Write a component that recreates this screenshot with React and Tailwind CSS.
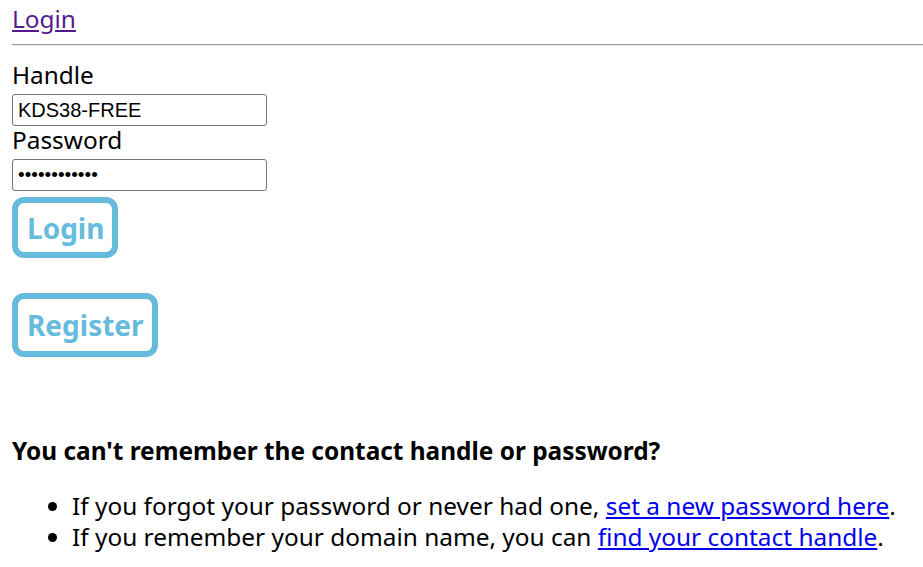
export default function App() {
  return (
    <div className="pl-[12px] font-['Noto_Sans',sans-serif] text-[24.4px] leading-[31px] text-black bg-white min-h-[567px]">
      <div className="pt-[3px] leading-[31px]">
        <a href="#" className="text-[#551a8b] underline">Login</a>
      </div>
      <hr className="mt-[10px] mb-[13px] border-0 border-t border-t-[#9a9a9a] border-b border-b-[#eeeeee]" />

      <form className="flex flex-col items-start">
        <label className="block">Handle</label>
        <input
          type="text"
          defaultValue="KDS38-FREE"
          className="block w-[255px] h-[32px] mt-[4px] px-[5px] border border-[#767676] rounded-[3px] font-['Liberation_Sans',sans-serif] text-[20px] leading-[26px]"
        />
        <label className="block -mt-[2px]">Password</label>
        <input
          type="password"
          defaultValue="secretpass12"
          className="block w-[255px] h-[32px] mt-[4px] px-[5px] border border-[#767676] rounded-[3px] font-['Liberation_Sans',sans-serif] text-[19px] leading-[26px]"
        />
        <button
          type="button"
          className="mt-[6px] pl-[9px] pr-[8px] h-[61px] border-[6px] border-[#66bbdd] rounded-[12px] bg-white text-[#66bbdd] font-bold text-[28px] leading-none"
        >
          Login
        </button>
        <button
          type="button"
          className="mt-[35px] pl-[9px] pr-[8px] h-[64px] border-[6px] border-[#66bbdd] rounded-[12px] bg-white text-[#66bbdd] font-bold text-[28px] leading-none"
        >
          Register
        </button>
      </form>

      <h3 className="mt-[78px] font-bold">You can't remember the contact handle or password?</h3>
      <ul className="mt-[24px] pl-[60px] list-disc">
        <li>
          If you forgot your password or never had one,{" "}
          <a href="#" className="text-[#0000ee] underline">set a new password here</a>.
        </li>
        <li>
          If you remember your domain name, you can{" "}
          <a href="#" className="text-[#0000ee] underline">find your contact handle</a>.
        </li>
      </ul>
    </div>
  );
}
